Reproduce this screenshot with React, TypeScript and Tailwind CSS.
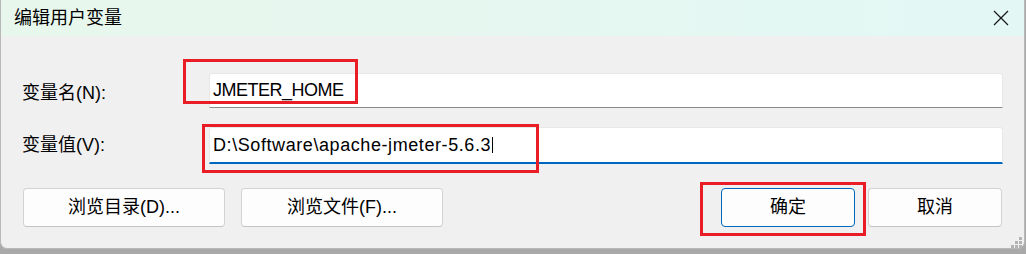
import React from 'react';

const font = 'font-["Liberation_Sans","Noto_Sans_CJK_SC",sans-serif]';

const Btn: React.FC<{ label: string; width: string; primary?: boolean }> = ({ label, width, primary }) => (
  <button
    className={`${width} h-[39px] rounded-[4px] border bg-[#fdfdfd] text-[18px] text-black flex items-center justify-center ${
      primary ? 'border-[#0067c0]' : 'border-[#d3d3d3] border-b-[#c4c4c4]'
    }`}
  >
    {label}
  </button>
);

export default function App() {
  return (
    <div className={`relative w-[1026px] h-[254px] bg-[#a9a9a9] overflow-hidden ${font}`}>
      {/* dialog window */}
      <div className="w-[1025px] h-[249px] flex flex-col border-x border-b border-[#b8b8b8] rounded-b-[7px] bg-[#f0f0f0] overflow-hidden">
        {/* title bar */}
        <div className="h-[36px] shrink-0 flex items-center justify-between pl-[13px] pr-[15px] bg-linear-to-r from-[#e8f7ec] to-[#e3f8f5]">
          <span className="text-[18px] text-black leading-none">编辑用户变量</span>
          <svg width="16" height="16" viewBox="0 0 16 16" className="text-[#1a1a1a]">
            <path d="M1 1 L15 15 M15 1 L1 15" stroke="currentColor" strokeWidth="1.3" fill="none" />
          </svg>
        </div>

        <div className="flex flex-col pl-[21px] pr-[21px] pt-[37px]">
          {/* name row */}
          <div className="flex items-center">
            <label className="w-[187px] shrink-0 pt-[5px] text-[18px] text-black">变量名(N):</label>
            <div className="flex-1 h-[35px] flex items-center pl-[3px] bg-white border border-[#e8e8e8] border-b-[#8a8a8a] rounded-t-[3px] text-[18px] text-black tracking-[-0.5px]">
              JMETER_HOME
            </div>
          </div>

          {/* value row */}
          <div className="flex items-center mt-[19px]">
            <label className="w-[187px] shrink-0 text-[18px] text-black">变量值(V):</label>
            <div className="flex-1 h-[37px] flex items-center pl-[3px] bg-white border border-[#e8e8e8] border-b-2 border-b-[#0067c0] rounded-t-[3px] text-[18px] text-black tracking-[0.58px]">
              D:\Software\apache-jmeter-5.6.3
              <span className="ml-[1px] w-px h-[16px] bg-black" />
            </div>
          </div>

          {/* buttons */}
          <div className="flex items-center mt-[24px] pl-[1px]">
            <div className="flex gap-[16px]">
              <Btn label="浏览目录(D)..." width="w-[202px]" />
              <Btn label="浏览文件(F)..." width="w-[202px]" />
            </div>
            <div className="flex-1" />
            <div className="flex gap-[13px] mr-[1px]">
              <Btn label="确定" width="w-[134px]" primary />
              <Btn label="取消" width="w-[134px]" />
            </div>
          </div>
        </div>
      </div>

      {/* resize grip */}
      <svg className="absolute left-[1011px] top-[237px]" width="12" height="12" viewBox="0 0 12 12">
        <g fill="#b3b3b3">
          <rect x="8" y="0" width="3" height="3" />
          <rect x="4" y="4" width="3" height="3" />
          <rect x="8" y="4" width="3" height="3" />
          <rect x="0" y="8" width="3" height="3" />
          <rect x="4" y="8" width="3" height="3" />
          <rect x="8" y="8" width="3" height="3" />
        </g>
      </svg>

      {/* red annotation boxes */}
      <div className="absolute left-[183px] top-[59px] w-[175px] h-[45px] border-[3px] border-[#e81d25]" />
      <div className="absolute left-[202px] top-[124px] w-[337px] h-[49px] border-[3px] border-[#e81d25]" />
      <div className="absolute left-[700px] top-[182px] w-[166px] h-[54px] border-[3px] border-[#e81d25]" />
    </div>
  );
}
